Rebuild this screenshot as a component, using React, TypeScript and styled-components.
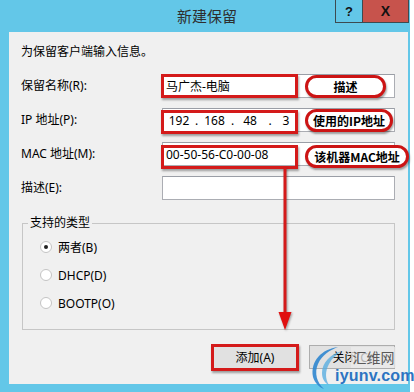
import React from "react";
import styled, { createGlobalStyle } from "styled-components";

const Global = createGlobalStyle`
  html, body { margin: 0; padding: 0; background: #ffffff; }
  body { font-family: "Noto Sans", "Noto Sans CJK SC", sans-serif; font-size: 12px; color: #000; }
`;

const Page = styled.div`
  position: relative;
  width: 414px;
  height: 392px;
  overflow: hidden;
`;

const Window = styled.div`
  width: 410px;
  height: 392px;
  background: #63c7e8;
  display: flex;
  flex-direction: column;
`;

const TitleBar = styled.div`
  height: 32px;
  flex: none;
  display: grid;
  grid-template-columns: 75px 1fr 75px;
  align-items: start;
`;

const Title = styled.div`
  grid-column: 2;
  text-align: center;
  line-height: 32px;
  font-size: 15px;
  color: #2e2e2e;
  font-family: "Noto Sans CJK SC", sans-serif;
  padding-left: 4px;
`;

const Controls = styled.div`
  grid-column: 3;
  display: flex;
  justify-content: flex-end;
  margin-right: 1px;
`;

const CtrlButton = styled.div<{ $close?: boolean }>`
  width: ${(p) => (p.$close ? 46 : 28)}px;
  height: 23px;
  box-sizing: border-box;
  border: 1px solid #3d4a50;
  border-left-width: ${(p) => (p.$close ? 0 : 1)}px;
  border-top-width: 0;
  background: ${(p) => (p.$close ? "#c7534c" : "#63c7e8")};
  display: flex;
  align-items: center;
  justify-content: center;
  font-family: "Liberation Sans", sans-serif;
  font-weight: bold;
  font-size: ${(p) => (p.$close ? 14 : 13)}px;
  color: #111;
`;

const Content = styled.div`
  position: relative;
  flex: 1;
  margin: 0 2px 8px 9px;
  background: #f0f0f0;
  padding: 12px 13px 0 12px;
  display: flex;
  flex-direction: column;
`;

const Intro = styled.div`
  line-height: 16px;
`;

const Form = styled.div`
  margin-top: 14px;
  display: grid;
  grid-template-columns: 141px 233px;
  grid-auto-rows: 24px;
  row-gap: 10px;
  align-items: center;
`;

const Label = styled.div`
  line-height: 16px;
`;

const Field = styled.div`
  position: relative;
  height: 24px;
  box-sizing: border-box;
  border: 1px solid #abadb3;
  border-top-color: #9a9ea6;
  background: #fff;
  display: flex;
  align-items: center;
  padding-left: 3px;
  white-space: pre;
`;

const IpPart = styled.span<{ $w: number }>`
  display: inline-block;
  width: ${(p) => p.$w}px;
  text-align: center;
`;

const RedBox = styled.div<{ $top: number }>`
  position: absolute;
  left: -2px;
  top: ${(p) => p.$top}px;
  width: 137px;
  height: 24px;
  box-sizing: border-box;
  border: 3px solid #d41a1a;
  box-shadow: 1px 2px 2px rgba(0, 0, 0, 0.35);
  pointer-events: none;
`;

const Pill = styled.div<{ $w: number; $top: number }>`
  position: absolute;
  left: 142px;
  top: ${(p) => p.$top}px;
  width: ${(p) => p.$w}px;
  height: 23px;
  box-sizing: border-box;
  border: 3px solid #cc1414;
  border-radius: 12px;
  background: #fff;
  box-shadow: 1px 2px 2px rgba(0, 0, 0, 0.35);
  display: flex;
  align-items: center;
  justify-content: center;
  font-weight: bold;
  font-size: 12px;
  font-family: "Noto Sans CJK SC", sans-serif;
  color: #000;
`;

const Group = styled.fieldset`
  margin: 15px 0 0 1px;
  width: 373px;
  box-sizing: border-box;
  border: 1px solid #c6c6c6;
  padding: 2px 0 12px 17px;
`;

const Legend = styled.legend`
  padding: 0 2px;
  margin-left: -12px;
  line-height: 16px;
`;

const RadioRow = styled.label`
  height: 28px;
  display: flex;
  align-items: center;
  gap: 6px;
`;

const RadioDot = styled.span<{ $on?: boolean }>`
  width: 12px;
  height: 12px;
  box-sizing: border-box;
  border-radius: 50%;
  border: 1px solid #c4c4c4;
  background: #fff;
  display: flex;
  align-items: center;
  justify-content: center;
  &::after {
    content: "";
    width: 4px;
    height: 4px;
    border-radius: 50%;
    background: ${(p) => (p.$on ? "#222" : "transparent")};
  }
`;

const ButtonRow = styled.div`
  margin-top: 15px;
  display: flex;
  justify-content: flex-end;
  gap: 11px;
`;

const Button = styled.div`
  position: relative;
  width: 86px;
  height: 24px;
  box-sizing: border-box;
  border: 1px solid #adadad;
  background: #e1e1e1;
  display: flex;
  align-items: center;
  justify-content: center;
`;

const ButtonRedBox = styled.div`
  position: absolute;
  left: -2px;
  top: -2px;
  right: -2px;
  bottom: -3px;
  border: 3px solid #d41a1a;
  box-shadow: 1px 2px 2px rgba(0, 0, 0, 0.35);
`;

const Arrow = styled.svg`
  position: absolute;
  left: 268px;
  top: 136px;
  overflow: visible;
  filter: drop-shadow(1px 1px 1px rgba(0, 0, 0, 0.35));
`;

const Watermark = styled.div`
  position: absolute;
  left: 308px;
  top: 343px;
  width: 106px;
  height: 49px;
  pointer-events: none;
`;

const WmSwirl = styled.svg`
  position: absolute;
  left: 0;
  top: 0;
`;

const WmCn = styled.div`
  position: absolute;
  left: 43px;
  top: 4px;
  width: 45px;
  height: 21px;
  background: rgba(235, 235, 235, 0.75);
  color: #5a5a5a;
  font-size: 14px;
  line-height: 21px;
  font-family: "Noto Sans CJK SC", sans-serif;
  text-align: center;
`;

const WmText = styled.div`
  position: absolute;
  left: 27px;
  top: 24px;
  font-family: "Liberation Sans", sans-serif;
  font-weight: bold;
  font-size: 16px;
  line-height: 18px;
  color: #2c74c2;
  letter-spacing: 0.2px;
`;

export default function App() {
  return (
    <Page>
      <Global />
      <Window>
        <TitleBar>
          <Title>新建保留</Title>
          <Controls>
            <CtrlButton>?</CtrlButton>
            <CtrlButton $close>X</CtrlButton>
          </Controls>
        </TitleBar>
        <Content>
          <Intro>为保留客户端输入信息。</Intro>
          <Form>
            <Label>保留名称(R):</Label>
            <Field>
              马广杰-电脑
              <RedBox $top={-1} />
              <Pill $w={81} $top={0}>描述</Pill>
            </Field>
            <Label>IP 地址(P):</Label>
            <Field>
              <IpPart $w={26}>192</IpPart>
              <IpPart $w={9}>.</IpPart>
              <IpPart $w={27}>168</IpPart>
              <IpPart $w={9}>.</IpPart>
              <IpPart $w={26}>48</IpPart>
              <IpPart $w={14}>.</IpPart>
              <IpPart $w={18}>3</IpPart>
              <RedBox $top={1} />
              <Pill $w={88} $top={0}>使用的IP地址</Pill>
            </Field>
            <Label>MAC 地址(M):</Label>
            <Field>
              00-50-56-C0-00-08
              <RedBox $top={2} />
              <Pill $w={104} $top={2}>该机器MAC地址</Pill>
            </Field>
            <Label>描述(E):</Label>
            <Field />
          </Form>
          <Group>
            <Legend>支持的类型</Legend>
            <RadioRow>
              <RadioDot $on />
              两者(B)
            </RadioRow>
            <RadioRow>
              <RadioDot />
              DHCP(D)
            </RadioRow>
            <RadioRow>
              <RadioDot />
              BOOTP(O)
            </RadioRow>
          </Group>
          <ButtonRow>
            <Button>
              添加(A)
              <ButtonRedBox />
            </Button>
            <Button>关闭(C)</Button>
          </ButtonRow>
          <Arrow width="16" height="162" viewBox="0 0 16 162">
            <line x1="8" y1="0" x2="8" y2="148" stroke="#d41a1a" strokeWidth="3" />
            <polygon points="1.5,144 14.5,144 8,162" fill="#e01010" />
          </Arrow>
        </Content>
      </Window>
      <Watermark>
        <WmSwirl width="40" height="49" viewBox="0 0 40 49">
          <path d="M30 4 C14 6 2 18 5 34 C7 40 11 44 16 46 C9 40 6 30 10 21 C14 12 22 7 30 4 Z" fill="#2f86cf" opacity="0.9" />
          <path d="M34 8 C22 11 14 20 14 30 C14 36 17 40 21 42 C17 36 17 28 21 21 C24 15 29 11 34 8 Z" fill="#5aaee0" opacity="0.8" />
        </WmSwirl>
        <WmCn>汇维网</WmCn>
        <WmText>iyunv.com</WmText>
      </Watermark>
    </Page>
  );
}
